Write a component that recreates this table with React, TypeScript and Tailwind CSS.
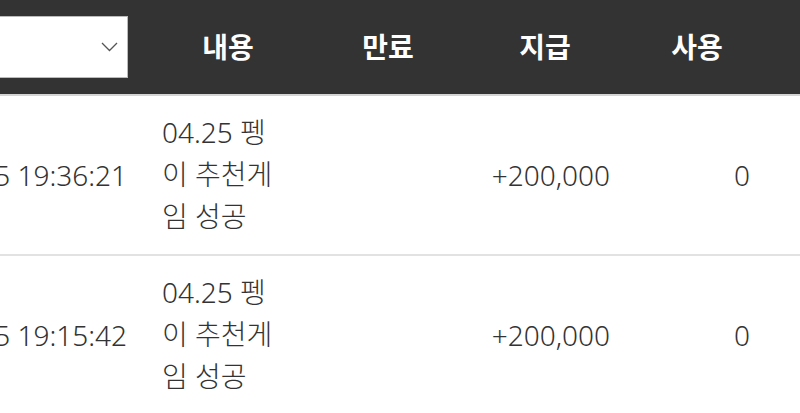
const font = "font-['Noto_Sans','Noto_Sans_CJK_KR',sans-serif]"

const rows = [
  { date: '2024-04-25 19:36:21', memo: '04.25 펭이 추천게임 성공', expire: '', give: '+200,000', use: '0' },
  { date: '2024-04-25 19:15:42', memo: '04.25 펭이 추천게임 성공', expire: '', give: '+200,000', use: '0' },
]

export default function App() {
  return (
    <div className={`w-[800px] h-[413px] overflow-hidden bg-white text-[#333] ${font}`}>
      {/* header */}
      <div className="flex h-[94px] bg-[#333333] text-white border-b-2 border-[#d4d4d4] box-content">
        <div className="w-[145px] flex items-center pr-[17px]">
          <div className="relative w-full h-[62px] bg-white border border-[#bbb] border-l-0 flex items-center justify-end pr-[9px]">
            <svg width="17" height="10" viewBox="0 0 17 10" fill="none">
              <path d="M1 1l7.5 7.5L16 1" stroke="#555" strokeWidth="1.3" />
            </svg>
          </div>
        </div>
        <div className="w-[166px] flex items-center justify-center text-[28px] font-bold">내용</div>
        <div className="w-[154px] flex items-center justify-center text-[28px] font-bold">만료</div>
        <div className="w-[160px] flex items-center justify-center text-[28px] font-bold">지급</div>
        <div className="w-[144px] flex items-center justify-center text-[28px] font-bold">사용</div>
      </div>

      {rows.map((r, i) => (
        <div key={i} className="flex h-[158px] border-b-2 border-[#e2e2e2] text-[28px] font-light box-content">
          <div className="w-[145px] flex items-center justify-end overflow-hidden whitespace-nowrap pr-[18px]">
            <span className="shrink-0">{r.date}</span>
          </div>
          <div className="w-[166px] flex items-center pl-[17px]">
            <p className="w-[126px] leading-[42px] -mt-[2px]">{r.memo}</p>
          </div>
          <div className="w-[154px] flex items-center justify-end pr-4">{r.expire}</div>
          <div className="w-[160px] flex items-center justify-end pr-[15px]">{r.give}</div>
          <div className="w-[144px] flex items-center justify-end pr-[19px]">{r.use}</div>
        </div>
      ))}
    </div>
  )
}
